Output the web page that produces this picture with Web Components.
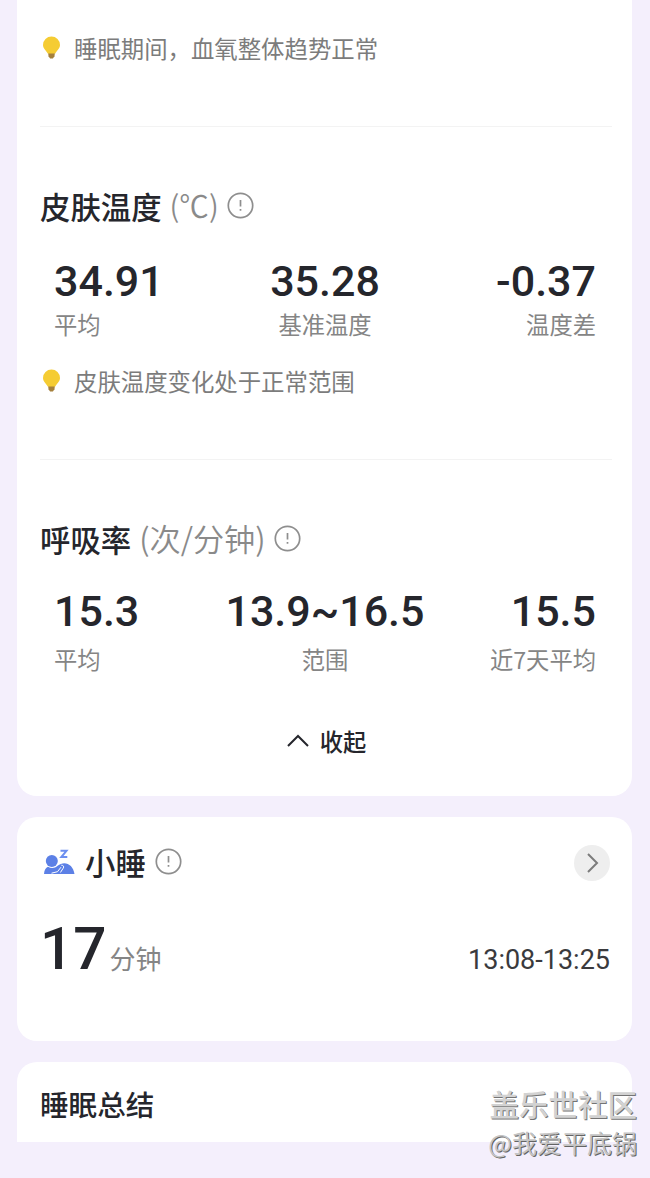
<!DOCTYPE html>
<html lang="zh-CN">
<head>
<meta charset="utf-8">
<title>睡眠</title>
<style>
  body {
    margin: 0;
    height: 1178px;
    position: relative;
    overflow: hidden;
    background: #f4effc;
    color: #25262c;
    font-family: Roboto, "Noto Sans CJK SC", sans-serif;
  }
</style>
</head>
<body>
<sleep-page></sleep-page>

<script>
class SleepCard extends HTMLElement {
  connectedCallback() {
    this.attachShadow({ mode: 'open' });
    this.shadowRoot.innerHTML = `
      <style>
        :host {
          display: flex;
          flex-direction: column;
          box-sizing: border-box;
          padding: 0 20px 0 23px;
          background: #fff;
          border-radius: 20px;
        }
        :host([cut="top"]) { border-radius: 0 0 20px 20px; }
        :host([cut="bottom"]) { border-radius: 20px 20px 0 0; }
      </style>
      <slot></slot>
    `;
  }
}
customElements.define('sleep-card', SleepCard);

class InfoIcon extends HTMLElement {
  connectedCallback() {
    this.attachShadow({ mode: 'open' });
    this.shadowRoot.innerHTML = `
      <style>
        :host { display: block; width: 27px; height: 27px; }
        svg { display: block; }
      </style>
      <svg width="27" height="27" viewBox="0 0 27 27" fill="none" stroke="#8e8e8e">
        <circle cx="13.5" cy="13.5" r="12.2" stroke-width="1.7"/>
        <path d="M13.5 8v6.5M13.5 17v1.8" stroke-width="1.7"/>
      </svg>
    `;
  }
}
customElements.define('info-icon', InfoIcon);

class TipLine extends HTMLElement {
  connectedCallback() {
    this.attachShadow({ mode: 'open' });
    this.shadowRoot.innerHTML = `
      <style>
        :host {
          display: flex;
          align-items: center;
          gap: 13px;
          height: 30px;
          padding-left: 2px;
          color: #7c7c7c;
          font: 400 23.4px/30px "Noto Sans CJK SC", sans-serif;
          white-space: nowrap;
        }
        svg { flex: none; }
        span { margin-top: -1px; }
      </style>
      <svg width="19" height="24" viewBox="0 0 19 24">
        <path d="M6 15.500h7l-.5 4.700-1.600 2.300H8.100l-1.600-2.300z" fill="#a5803c"/>
        <path d="M9.500 .5a8.500 8.500 0 0 1 8.500 8.500c0 3.700-3.300 5.600-4.700 8.600H5.700C4.300 14.600 1 12.700 1 9A8.500 8.500 0 0 1 9.500.5z" fill="#f5cc33"/>
      </svg>
      <span><slot></slot></span>
    `;
  }
}
customElements.define('tip-line', TipLine);

class SectionTitle extends HTMLElement {
  connectedCallback() {
    const unit = this.getAttribute('unit');
    this.attachShadow({ mode: 'open' });
    this.shadowRoot.innerHTML = `
      <style>
        :host {
          display: flex;
          align-items: center;
          height: 40px;
          font: 500 30.4px/40px "Noto Sans CJK SC", sans-serif;
          white-space: nowrap;
        }
        .unit {
          margin: -5px 0 0 8px;
          color: #8a8a8a;
          font-size: var(--unit-size, 29.6px);
          font-weight: 350;
        }
        .name { margin-top: -2px; }
        info-icon { margin: -3px 0 0 var(--info-gap, 8px); }
      </style>
      <slot name="icon"></slot>
      <span class="name"><slot></slot></span>
      ${unit ? `<span class="unit">${unit}</span>` : ''}
      ${this.hasAttribute('plain') ? '' : '<info-icon></info-icon>'}
    `;
  }
}
customElements.define('section-title', SectionTitle);

class StatItem extends HTMLElement {
  connectedCallback() {
    this.attachShadow({ mode: 'open' });
    this.shadowRoot.innerHTML = `
      <style>
        :host { display: block; text-align: center; white-space: nowrap; }
        :host(:first-child) { text-align: left; }
        :host(:last-child) { text-align: right; }
        .value {
          font: 500 43px/50px Roboto, sans-serif;
        }
        .label {
          margin-top: var(--label-gap, 3px);
          color: #858585;
          font: 400 23.3px/30px "Noto Sans CJK SC", sans-serif;
        }
      </style>
      <div class="value">${this.getAttribute('value')}</div>
      <div class="label"><slot></slot></div>
    `;
  }
}
customElements.define('stat-item', StatItem);

class StatRow extends HTMLElement {
  connectedCallback() {
    this.attachShadow({ mode: 'open' });
    this.shadowRoot.innerHTML = `
      <style>
        :host {
          display: grid;
          grid-template-columns: 1fr auto 1fr;
          padding: 0 16px 0 14px;
        }
      </style>
      <slot></slot>
    `;
  }
}
customElements.define('stat-row', StatRow);

class CollapseButton extends HTMLElement {
  connectedCallback() {
    this.attachShadow({ mode: 'open' });
    this.shadowRoot.innerHTML = `
      <style>
        :host {
          display: flex;
          justify-content: center;
          align-items: center;
          gap: 11px;
          height: 30px;
          padding-left: 1px;
          font: 500 23.3px/30px "Noto Sans CJK SC", sans-serif;
        }
      </style>
      <svg width="22" height="14" viewBox="0 0 22 14" fill="none" stroke="#25262c" stroke-width="2">
        <path d="M1 12L11 2l10 10"/>
      </svg>
      <span><slot></slot></span>
    `;
  }
}
customElements.define('collapse-button', CollapseButton);

class NapIcon extends HTMLElement {
  connectedCallback() {
    this.attachShadow({ mode: 'open' });
    this.shadowRoot.innerHTML = `
      <style>
        :host { display: block; width: 33px; height: 26px; margin: -3px 9px 0 3px; }
        svg { display: block; }
      </style>
      <svg width="33" height="26" viewBox="0 0 33 26">
        <path d="M1 25c.3-4 1.700-6.300 4-7.300 3 1.900 6.800 1.700 9.600-.9 6.800-5.700 15.600-1.600 16.900 8.200z" fill="#5c80e6"/>
        <circle cx="8.800" cy="12" r="6" fill="#5c80e6"/>
        <path d="M8.500 24.200l6-1.500 3.500-4.500M18.300 16.200c2.200.1 3 1.400 1.900 3l-2.800 4.300" fill="none" stroke="#fff" stroke-width="1"/>
        <path d="M17.500 1.800h6l-5.200 6.200h6" fill="none" stroke="#6d8ff0" stroke-width="2"/>
      </svg>
    `;
  }
}
customElements.define('nap-icon', NapIcon);

class NapSummary extends HTMLElement {
  connectedCallback() {
    this.attachShadow({ mode: 'open' });
    this.shadowRoot.innerHTML = `
      <style>
        :host { display: block; }
        .head, .body { display: flex; justify-content: space-between; }
        .head { align-items: center; padding: 26px 2px 0 0; }
        .body { align-items: baseline; margin-top: 31px; padding-right: 2px; height: 70px; }
        .arrow {
          display: grid;
          place-items: center;
          width: 36px;
          height: 36px;
          margin-top: -1px;
          border-radius: 50%;
          background: #eee;
        }
        section-title { --info-gap: 9px; }
        .minutes { font: 500 58.5px/70px Roboto, sans-serif; }
        .unit {
          margin-left: 3px;
          color: #858585;
          font: 400 26px/36px "Noto Sans CJK SC", sans-serif;
        }
        .time { color: #3a3a3d; font: 400 27px/36px Roboto, sans-serif; }
      </style>
      <div class="head">
        <section-title><nap-icon slot="icon"></nap-icon>小睡</section-title>
        <span class="arrow">
          <svg width="14" height="22" viewBox="0 0 14 22" fill="none" stroke="#7c7c7c" stroke-width="2">
            <path d="M3 2l9 9-9 9"/>
          </svg>
        </span>
      </div>
      <div class="body">
        <div><span class="minutes">17</span><span class="unit">分钟</span></div>
        <span class="time">13:08-13:25</span>
      </div>
    `;
  }
}
customElements.define('nap-summary', NapSummary);

class PostMark extends HTMLElement {
  connectedCallback() {
    this.attachShadow({ mode: 'open' });
    this.shadowRoot.innerHTML = `
      <style>
        :host {
          display: block;
          position: absolute;
          right: 13px;
          bottom: 19px;
          text-align: right;
          white-space: nowrap;
          font-family: "Noto Sans CJK SC", sans-serif;
        }
        .site {
          color: #d2d2d2;
          font-size: 29.5px;
          font-weight: 500;
          line-height: 44px;
          text-shadow: 1px 1px 0 #747474;
        }
        .user {
          color: #c4c4c4;
          font-size: 25px;
          line-height: 34px;
          text-shadow: 1px 1px 0 #646464;
        }
      </style>
      <div class="site">盖乐世社区</div>
      <div class="user">@我爱平底锅</div>
    `;
  }
}
customElements.define('post-mark', PostMark);

class SleepPage extends HTMLElement {
  connectedCallback() {
    this.attachShadow({ mode: 'open' });
    this.shadowRoot.innerHTML = `
      <style>
        :host {
          display: flex;
          flex-direction: column;
          gap: 21px;
          padding: 0 18px 0 17px;
        }
        hr {
          width: 100%;
          height: 1px;
          margin: 0;
          border: 0;
          background: #f3f3f3;
        }
        .vitals { height: 796px; padding-top: 33px; }
        .vitals hr { margin: 63px 0 60px; }
        .vitals stat-row { margin-top: 29px; }
        .vitals stat-row + tip-line { margin-top: 27px; }
        .vitals .rate { --label-gap: 8px; margin-top: 26px; }
        .rate-title { --unit-size: 31.2px; }
        collapse-button { margin-top: 52px; }
        .nap { height: 224px; }
        .summary { height: 80px; padding-top: 23px; }
        .summary section-title { font-size: 28.6px; }
      </style>
      <sleep-card class="vitals" cut="top">
        <tip-line>睡眠期间，血氧整体趋势正常</tip-line>
        <hr>
        <section-title unit="(℃)">皮肤温度</section-title>
        <stat-row>
          <stat-item value="34.91">平均</stat-item>
          <stat-item value="35.28">基准温度</stat-item>
          <stat-item value="-0.37">温度差</stat-item>
        </stat-row>
        <tip-line>皮肤温度变化处于正常范围</tip-line>
        <hr>
        <section-title class="rate-title" unit="(次/分钟)">呼吸率</section-title>
        <stat-row class="rate">
          <stat-item value="15.3">平均</stat-item>
          <stat-item value="13.9~16.5">范围</stat-item>
          <stat-item value="15.5">近7天平均</stat-item>
        </stat-row>
        <collapse-button>收起</collapse-button>
      </sleep-card>
      <sleep-card class="nap">
        <nap-summary></nap-summary>
      </sleep-card>
      <sleep-card class="summary" cut="bottom">
        <section-title plain>睡眠总结</section-title>
      </sleep-card>
      <post-mark></post-mark>
    `;
  }
}
customElements.define('sleep-page', SleepPage);
</script>
</body>
</html>
